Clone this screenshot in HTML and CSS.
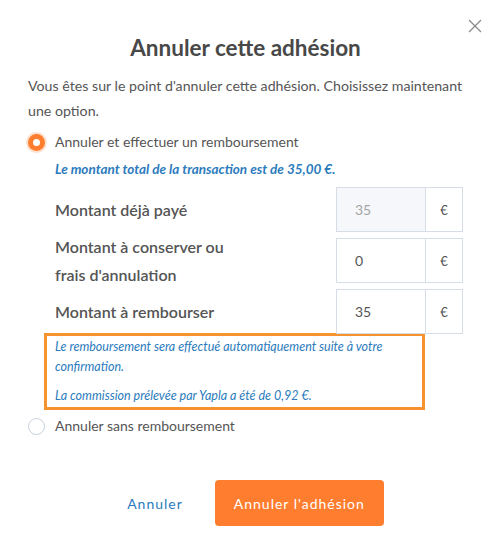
FILE: index.html
```html
<!DOCTYPE html>
<html lang="fr">
<head>
    <meta charset="UTF-8">
    <meta name="viewport" content="width=device-width, initial-scale=1.0">
    <title>Annuler cette adhésion</title>
    <link rel="stylesheet" href="styles.css">
</head>
<body>
    <div class="modal">
        <button type="button" class="btn-close" aria-label="Fermer">
            <svg width="14" height="14" viewBox="0 0 14 14">
                <path d="M1 1 L13 13 M13 1 L1 13" stroke="#8a8a8a" stroke-width="1.3" fill="none"/>
            </svg>
        </button>

        <h2 class="modal-title">Annuler cette adhésion</h2>

        <p class="modal-intro">Vous êtes sur le point d'annuler cette adhésion. Choisissez maintenant une option.</p>

        <label class="radio-option">
            <span class="radio checked"></span>
            <span>Annuler et effectuer un remboursement</span>
        </label>

        <div class="refund-details">
            <p class="total-note">Le montant total de la transaction est de 35,00 €.</p>

            <div class="amount-row">
                <span class="amount-label">Montant déjà payé</span>
                <div class="input-group">
                    <input type="text" value="35" readonly class="readonly">
                    <span class="addon">€</span>
                </div>
            </div>
            <div class="amount-row">
                <span class="amount-label">Montant à conserver ou frais d'annulation</span>
                <div class="input-group">
                    <input type="text" value="0">
                    <span class="addon">€</span>
                </div>
            </div>
            <div class="amount-row">
                <span class="amount-label">Montant à rembourser</span>
                <div class="input-group">
                    <input type="text" value="35">
                    <span class="addon">€</span>
                </div>
            </div>
        </div>

        <div class="info-box">
            <p>Le remboursement sera effectué automatiquement suite à votre confirmation.</p>
            <p>La commission prélevée par Yapla a été de 0,92 €.</p>
        </div>

        <label class="radio-option second">
            <span class="radio"></span>
            <span>Annuler sans remboursement</span>
        </label>

        <div class="button-group">
            <button type="button" class="btn-link">Annuler</button>
            <button type="button" class="btn-primary">Annuler l'adhésion</button>
        </div>
    </div>
</body>
</html>
```

FILE: styles.css
```css
body {
    margin: 0;
    font-family: Lato, "Noto Sans", Arial, sans-serif;
    color: #555;
    background: #fff;
}
.modal {
    position: relative;
    width: 491px;
    height: 542px;
    box-sizing: border-box;
    padding: 0 28px;
}
.btn-close {
    position: absolute;
    top: 19px;
    right: 9px;
    padding: 0;
    border: none;
    background: none;
    cursor: pointer;
    line-height: 0;
}
.modal-title {
    margin: 0;
    padding-top: 33px;
    text-align: center;
    font-size: 22.5px;
    font-weight: 700;
    line-height: 30px;
    color: #484848;
}
.modal-intro {
    margin: 10px 0 0;
    font-size: 14.2px;
    line-height: 25px;
    color: #555;
}
.radio-option {
    display: flex;
    align-items: center;
    gap: 10px;
    margin-top: 9px;
    font-size: 14px;
    line-height: 20px;
    color: #555;
}
.radio {
    width: 17px;
    height: 17px;
    box-sizing: border-box;
    border: 1px solid #c7cfdb;
    border-radius: 50%;
    background: #fff;
    flex-shrink: 0;
}
.radio.checked {
    border: 5.5px solid #ff7d2e;
    box-shadow: 0 0 0 2px #fde1cf;
}
.refund-details {
    padding-left: 27px;
}
.total-note {
    margin: 8px 0 0;
    font-size: 13.5px;
    line-height: 18px;
    font-weight: 700;
    font-style: italic;
    color: #2b7bbd;
}
.amount-row {
    display: flex;
    align-items: center;
    justify-content: space-between;
    height: 45px;
    margin-top: 6px;
}
.total-note + .amount-row {
    margin-top: 9px;
}
.amount-label {
    width: 190px;
    font-size: 16px;
    font-weight: 600;
    line-height: 28px;
    color: #555;
}
.input-group {
    display: flex;
    height: 45px;
    border: 1px solid #d6dde7;
    box-sizing: border-box;
}
.input-group input {
    width: 89px;
    box-sizing: border-box;
    border: none;
    border-right: 1px solid #d6dde7;
    padding: 0 18px;
    font-family: inherit;
    font-size: 14px;
    color: #555;
    outline: none;
}
.input-group input.readonly {
    background: #f5f7fa;
    color: #a5a5a5;
}
.addon {
    width: 36px;
    display: flex;
    align-items: center;
    justify-content: center;
    font-size: 13px;
    color: #555;
}
.info-box {
    margin: -1px 38px 0 16px;
    padding: 1px 8px 1px;
    border: 3px solid #f7932f;
    font-size: 12.5px;
    font-style: italic;
    line-height: 20px;
    color: #2b7bbd;
}
.info-box p {
    margin: 0;
}
.info-box p + p {
    margin-top: 9px;
}
.radio-option.second {
    margin-top: 6px;
}
.button-group {
    display: flex;
    justify-content: center;
    align-items: center;
    gap: 32px;
    margin-top: 44px;
    padding-left: 20px;
}
.btn-link {
    border: none;
    background: none;
    padding: 0;
    font-family: inherit;
    font-size: 14px;
    letter-spacing: 1px;
    color: #2b7bbd;
    cursor: pointer;
}
.btn-primary {
    width: 169px;
    height: 46px;
    border: none;
    border-radius: 4px;
    background: #ff7d2e;
    color: #fff;
    font-family: inherit;
    font-size: 14px;
    letter-spacing: 1px;
    cursor: pointer;
}
```
